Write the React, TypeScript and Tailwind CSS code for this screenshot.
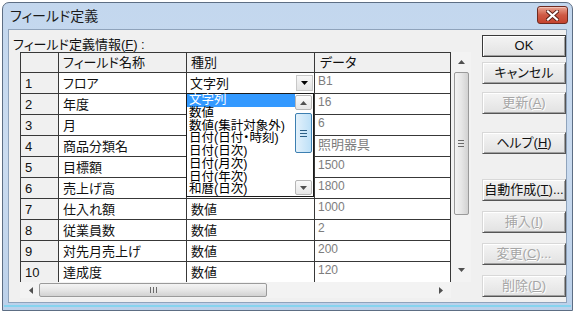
import React from "react";

const font =
  "font-['Liberation_Sans','Noto_Sans_CJK_JP',sans-serif] [font-feature-settings:'palt']";

type Dir = "up" | "down" | "left" | "right";
function Tri({ dir, color = "#505050" }: { dir: Dir; color?: string }) {
  const v = dir === "up" || dir === "down";
  const w = v ? 7 : 4;
  const h = v ? 4 : 7;
  const pts = {
    up: "0,4 3.5,0 7,4",
    down: "0,0 7,0 3.5,4",
    left: "4,0 4,7 0,3.5",
    right: "0,0 0,7 4,3.5",
  }[dir];
  return (
    <svg width={w} height={h} viewBox={`0 0 ${w} ${h}`}>
      <polygon points={pts} fill={color} />
    </svg>
  );
}

const rows = [
  { n: "1", name: "フロア", type: "", data: "B1" },
  { n: "2", name: "年度", type: "数値", data: "16" },
  { n: "3", name: "月", type: "数値", data: "6" },
  { n: "4", name: "商品分類名", type: "文字列", data: "照明器具" },
  { n: "5", name: "目標額", type: "数値", data: "1500" },
  { n: "6", name: "売上げ高", type: "数値", data: "1800" },
  { n: "7", name: "仕入れ額", type: "数値", data: "1000" },
  { n: "8", name: "従業員数", type: "数値", data: "2" },
  { n: "9", name: "対先月売上げ", type: "数値", data: "200" },
  { n: "10", name: "達成度", type: "数値", data: "120" },
];

const listItems = [
  "文字列",
  "数値",
  "数値(集計対象外)",
  "日付(日付・時刻)",
  "日付(日次)",
  "日付(月次)",
  "日付(年次)",
  "和暦(日次)",
];

function Btn({
  children,
  disabled,
  def,
  className = "",
}: {
  children: React.ReactNode;
  disabled?: boolean;
  def?: boolean;
  className?: string;
}) {
  return (
    <div
      className={
        "flex h-[22px] w-[84px] items-center justify-center bg-gradient-to-b from-[#f4f4f4] to-[#e2e2e2] text-[13px] leading-[16px] shadow-[inset_1px_1px_0_#ffffff,inset_-1px_-1px_0_#a0a0a0] " +
        (def
          ? "border border-[#3a3a3a] "
          : "border border-[#d8d8d8] border-r-[#555555] border-b-[#555555] ") +
        (disabled
          ? "text-[#a6a6a6] [text-shadow:1px_1px_0_#ffffff] "
          : "text-[#111111] ") +
        className
      }
    >
      {children}
    </div>
  );
}

export default function App() {
  return (
    <div className={"h-[315px] w-[577px] overflow-hidden bg-white pl-[2px] pt-[2px] " + font}>
      <div className="flex h-[309px] w-[571px] flex-col rounded-t-[7px] border border-[#5d6e84] bg-gradient-to-b from-[#c3d7ee] via-[#cbdcf0] to-[#bcd1ea]">
        {/* title bar */}
        <div className="flex h-[26px] items-start pl-[7px] pr-[4px]">
          <div className="mt-[4px] text-[14px] leading-[18px] text-[#1b1b1b]">フィールド定義</div>
          <div className="ml-auto mt-[3px] flex h-[18px] w-[31px] items-center justify-center rounded-[3px] border border-[#6e2a20] bg-gradient-to-b from-[#e9a593] via-[#cf5a45] to-[#c4432f] shadow-[inset_0_1px_0_#f3c3b7]">
            <svg width="13" height="11" viewBox="0 0 13 11">
              <path d="M2 1.5 L11 9.5 M11 1.5 L2 9.5" stroke="#5a1f17" strokeWidth="4" strokeLinecap="square" />
              <path d="M2 1.5 L11 9.5 M11 1.5 L2 9.5" stroke="#ffffff" strokeWidth="2.2" strokeLinecap="square" />
            </svg>
          </div>
        </div>

        {/* client */}
        <div className="mx-[5px] flex h-[274px] border border-[#8fa3bb] bg-[#f0f0f0]">
          {/* left */}
          <div className="w-[473px] pl-[4px] pt-[7px]">
            <div className="h-[15px] text-[13px] leading-[15px] text-[#111111]">
              フィールド定義情報(<span className="underline">F</span>) :
            </div>
            <div className="ml-[7px]">
              <div className="flex">
                <div className="relative h-[230px] w-[431px] overflow-visible">
                  <div className="h-[230px] w-[431px] overflow-hidden border-l border-t border-[#383838] text-[13px] text-[#111111]">
                    {/* header */}
                    <div className="flex h-[20px] bg-[#f0f0f0]">
                      <div className="w-[38px] border-b border-r border-[#383838]" />
                      <div className="flex w-[128px] items-center border-b border-r border-[#383838] pl-[4px] leading-[16px]">
                        フィールド名称
                      </div>
                      <div className="flex w-[128px] items-center border-b border-r border-[#383838] pl-[4px] leading-[16px]">
                        種別
                      </div>
                      <div className="flex w-[136px] items-center border-b border-r border-[#383838] pl-[5px] leading-[16px]">
                        データ
                      </div>
                    </div>
                    {rows.map((r, i) => (
                      <div key={r.n} className="flex h-[21px] shrink-0">
                        <div className="flex w-[38px] items-center border-b border-r border-[#383838] bg-[#f0f0f0] pl-[4px] pt-[1px] leading-[16px]">
                          {r.n}
                        </div>
                        <div className="flex w-[128px] items-center border-b border-r border-[#383838] bg-white pl-[4px] pt-[1px] leading-[16px]">
                          {r.name}
                        </div>
                        <div className="flex w-[128px] items-center border-b border-r border-[#383838] bg-white leading-[16px]">
                          {i === 0 ? (
                            <div className="flex h-full w-full items-center pl-[3px]">
                              <span className="pt-[1px]">文字列</span>
                              <div className="ml-auto mr-[1px] flex h-[16px] w-[17px] items-center justify-center border border-[#c8c8c8] bg-gradient-to-b from-[#f7f7f7] to-[#e3e3e3]">
                                <Tri dir="down" color="#000000" />
                              </div>
                            </div>
                          ) : (
                            <span className="pl-[4px] pt-[1px]">{r.type}</span>
                          )}
                        </div>
                        <div
                          className={
                            "w-[136px] border-b border-r border-[#383838] bg-white pl-[3px] text-[#7d7d7d] " +
                            (/^[0-9A-Z]/.test(r.data)
                              ? "pt-[1px] text-[12px] leading-[14px]"
                              : "pt-[1px] text-[13px] leading-[15px]")
                          }
                        >
                          {r.data}
                        </div>
                      </div>
                    ))}
                  </div>

                  {/* dropdown list */}
                  <div className="absolute left-[166px] top-[41px] flex h-[104px] w-[128px] border border-[#1a1a1a] bg-white text-[12.5px] text-black">
                    <div className="w-[108px]">
                      {listItems.map((t, i) => (
                        <div
                          key={t}
                          className={
                            "h-[12.75px] overflow-visible whitespace-nowrap pl-[2px] leading-[12.75px] " +
                            (i === 0 ? "bg-[#3399ff] text-white" : "")
                          }
                        >
                          {t}
                        </div>
                      ))}
                    </div>
                    <div className="flex w-[17px] flex-col pb-[1px] pt-[1px]">
                      <div className="flex h-[15px] items-center justify-center rounded-[2px] border border-[#b6b6b6] bg-gradient-to-b from-[#fafafa] to-[#e6e6e6]">
                        <Tri dir="up" />
                      </div>
                      <div className="mt-[3px] flex h-[40px] flex-col items-center justify-center gap-[2px] rounded-[2px] border border-[#3c7fb1] bg-gradient-to-r from-[#e3f1fb] to-[#bde0f7]">
                        <div className="h-px w-[7px] bg-[#2b5f85]" />
                        <div className="h-px w-[7px] bg-[#2b5f85]" />
                        <div className="h-px w-[7px] bg-[#2b5f85]" />
                      </div>
                      <div className="flex-1" />
                      <div className="flex h-[15px] items-center justify-center rounded-[2px] border border-[#b6b6b6] bg-gradient-to-b from-[#fafafa] to-[#e6e6e6]">
                        <Tri dir="down" />
                      </div>
                    </div>
                  </div>
                </div>

                {/* vertical scrollbar */}
                <div className="flex h-[230px] w-[20px] flex-col items-center bg-[#f3f3f3]">
                  <div className="flex h-[18px] items-center justify-center pt-[2px]">
                    <Tri dir="up" />
                  </div>
                  <div className="mt-[2px] flex h-[143px] w-[15px] flex-col items-center justify-center gap-[2px] rounded-[2px] border border-[#9a9a9a] bg-gradient-to-r from-[#f4f4f4] via-[#e6e6e6] to-[#d2d2d2]">
                    <div className="h-px w-[6px] bg-[#6a6a6a]" />
                    <div className="h-px w-[6px] bg-[#6a6a6a]" />
                    <div className="h-px w-[6px] bg-[#6a6a6a]" />
                  </div>
                  <div className="flex-1" />
                  <div className="flex h-[18px] items-center justify-center pb-[6px]">
                    <Tri dir="down" />
                  </div>
                </div>
              </div>

              {/* horizontal scrollbar */}
              <div className="flex h-[16px]">
                <div className="flex h-[16px] w-[431px] items-center bg-[#f3f3f3]">
                  <div className="flex w-[19px] justify-center pl-[2px]">
                    <Tri dir="left" />
                  </div>
                  <div className="flex h-[14px] w-[228px] items-center justify-center gap-[2px] rounded-[2px] border border-[#9a9a9a] bg-gradient-to-b from-[#f4f4f4] via-[#e6e6e6] to-[#d2d2d2]">
                    <div className="h-[6px] w-px bg-[#6a6a6a]" />
                    <div className="h-[6px] w-px bg-[#6a6a6a]" />
                    <div className="h-[6px] w-px bg-[#6a6a6a]" />
                  </div>
                  <div className="flex-1" />
                  <div className="flex w-[19px] justify-center pr-[2px]">
                    <Tri dir="right" />
                  </div>
                </div>
                <div className="h-[16px] w-[20px] bg-[#f0f0f0]" />
              </div>
            </div>
          </div>

          {/* buttons */}
          <div className="flex w-[84px] flex-col pt-[5px]">
            <Btn def>OK</Btn>
            <Btn className="mt-[5px]">キャンセル</Btn>
            <Btn disabled className="mt-[8px]">
              更新(<span className="underline">A</span>)
            </Btn>
            <Btn className="mt-[18px]">
              ヘルプ(<span className="underline">H</span>)
            </Btn>
            <Btn className="mt-[25px]">
              自動作成(<span className="underline">T</span>)...
            </Btn>
            <Btn disabled className="mt-[10px]">
              挿入(<span className="underline">I</span>)
            </Btn>
            <Btn disabled className="mt-[10px]">
              変更(<span className="underline">C</span>)...
            </Btn>
            <Btn disabled className="mt-[10px]">
              削除(<span className="underline">D</span>)
            </Btn>
          </div>
        </div>
        <div className="mx-[1px] mt-[2px] h-[2px] bg-[#86d4ef]" />
      </div>
    </div>
  );
}
